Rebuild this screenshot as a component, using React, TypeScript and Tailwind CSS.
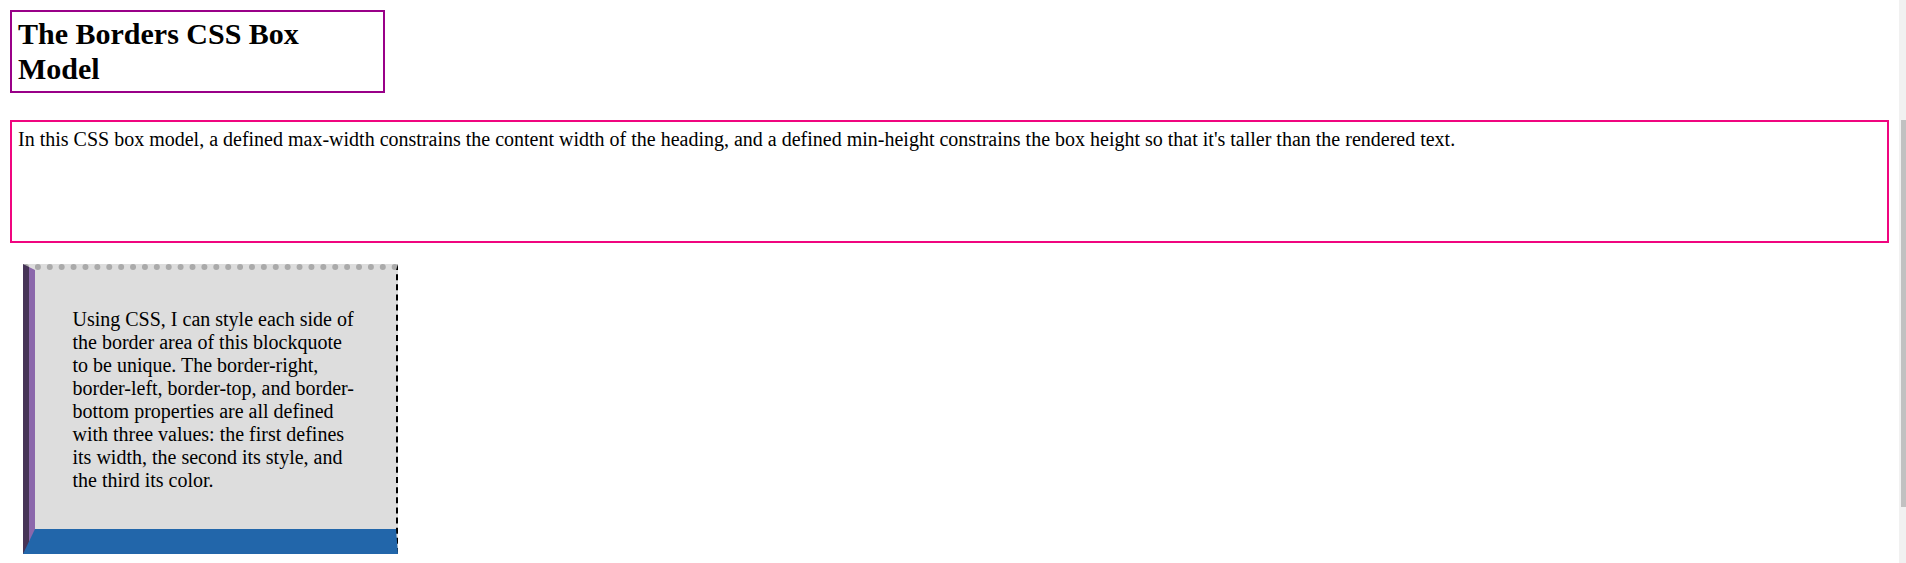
import React from 'react'

const PARA_TEXT =
  "In this CSS box model, a defined max-width constrains the content width of the heading, and a defined min-height constrains the box height so that it's taller than the rendered text."

const QUOTE_TEXT =
  'Using CSS, I can style each side of the border area of this blockquote to be unique. The border-right, border-left, border-top, and border-bottom properties are all defined with three values: the first defines its width, the second its style, and the third its color.'

function FakeScrollbar() {
  return (
    <div className="fixed top-0 right-0 h-full w-[7px] bg-[#f1f1f1]">
      <div className="mt-[120px] ml-[2px] h-[387px] w-[5px] bg-[#c1c1c1]" />
    </div>
  )
}

export default function App() {
  return (
    <div className="min-h-screen bg-white pt-[10px] pl-[10px] pr-[17px] font-['Liberation_Serif',serif] text-black">
      <h1 className="box-border max-w-[375px] border-2 border-[#990088] px-[6px] pt-[5px] pb-[5px] text-[30px] leading-[34.5px] font-bold">
        The Borders CSS Box Model
      </h1>

      <p className="mt-[27px] box-border h-[123px] border-2 border-[#f0057f] px-[6px] pt-[6px] text-[20px] leading-[23px]">
        {PARA_TEXT}
      </p>

      <blockquote className="mt-[21px] ml-[13px] box-border w-[375px] bg-[#dddddd] p-[37.5px] text-[20px] leading-[23px] [border-top:6px_dotted_#aaaaaa] [border-right:2px_dashed_#000000] [border-bottom:25px_solid_#2266aa] [border-left:12px_groove_#8b67ab]">
        {QUOTE_TEXT}
      </blockquote>

      <FakeScrollbar />
    </div>
  )
}
